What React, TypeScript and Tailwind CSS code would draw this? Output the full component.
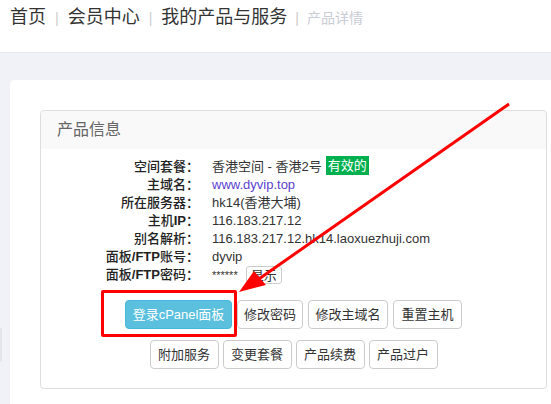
import React from 'react';

const B: React.FC<{ children: React.ReactNode }> = ({ children }) => <span className="font-bold">{children}</span>;

const rows: { label: React.ReactNode; key: string; value: React.ReactNode }[] = [
  {
    key: 'plan',
    label: '空间套餐：',
    value: (
      <>
        <span>香港空间 - 香港2号</span>
        <span className="-mt-[3px] ml-[4px] inline-block w-[43px] bg-[#00b04f] text-center text-[13px] leading-[19px] text-white">有效的</span>
      </>
    ),
  },
  { key: 'domain', label: '主域名：', value: <span className="text-[#5b3fd0]">www.dyvip.top</span> },
  { key: 'server', label: '所在服务器：', value: <span>hk14(香港大埔)</span> },
  {
    key: 'ip',
    label: (
      <>
        主机<B>IP</B>：
      </>
    ),
    value: <span>116.183.217.12</span>,
  },
  { key: 'alias', label: '别名解析：', value: <span>116.183.217.12.hk14.laoxuezhuji.com</span> },
  {
    key: 'ftp',
    label: (
      <>
        面板<B>/FTP</B>账号：
      </>
    ),
    value: <span>dyvip</span>,
  },
  {
    key: 'pwd',
    label: (
      <>
        面板<B>/FTP</B>密码：
      </>
    ),
    value: (
      <>
        <span className="text-[11px]">******</span>
        <span className="ml-[8px] inline-flex h-[18px] items-center rounded-[3px] border border-[#ccc] px-[4px] text-[13px] leading-[15px]">显示</span>
      </>
    ),
  },
];

const row1: [string, string][] = [
  ['修改密码', 'w-[66px]'],
  ['修改主域名', 'w-[80px]'],
  ['重置主机', 'w-[69px]'],
];
const row2 = ['附加服务', '变更套餐', '产品续费', '产品过户'];

const Btn: React.FC<{ children: React.ReactNode; primary?: boolean; className?: string }> = ({
  children,
  primary,
  className = '',
}) => (
  <div
    className={`h-[29px] rounded-[4px] border text-center text-[13px] leading-[27px] ${
      primary ? 'border-[#46b8da] bg-[#5bc0de] text-white' : 'border-[#ccc] bg-white text-[#333]'
    } ${className}`}
  >
    {children}
  </div>
);

export default function App() {
  return (
    <div
      className="relative h-[404px] w-[551px] overflow-hidden bg-[#f1f2f7] text-[#333]"
      style={{ fontFamily: '"Liberation Sans", "Noto Sans CJK SC", sans-serif' }}
    >
      {/* breadcrumb */}
      <div className="flex h-[53px] items-start border-b border-[#e6e8ee] bg-white pl-[10px] pt-[5px]">
        <div className="flex items-baseline text-[18px] leading-[24px] text-[#333]">
          <span>首页</span>
          <span className="mx-[9px] text-[14px] text-[#ccc]">|</span>
          <span>会员中心</span>
          <span className="mx-[9px] text-[14px] text-[#ccc]">|</span>
          <span>我的产品与服务</span>
          <span className="mx-[8px] text-[14px] text-[#ccc]">|</span>
          <span className="text-[14px] text-[#c8ccd4]">产品详情</span>
        </div>
      </div>

      <div className="pl-[10px] pt-[27px]">
        <div className="h-[400px] w-[580px] rounded-tl-[4px] bg-white pl-[30px] pt-[30px]">
          <div className="w-[507px] rounded-[4px] border border-[#ddd]">
            <div className="flex h-[38px] items-center rounded-t-[4px] bg-[#f9f9f9] pl-[16px] text-[16px] text-[#666]">
              产品信息
            </div>
            <div className="pb-[19px] pt-[9px]">
              {rows.map((r) => (
                <div key={r.key} className="flex h-[18px] items-center text-[13px] leading-[18px]">
                  <div className="w-[158px] text-right font-medium text-[#222]">{r.label}</div>
                  <div className="ml-[13px] flex items-center">{r.value}</div>
                </div>
              ))}
              <div className="mt-[16px] flex justify-center gap-[5px]">
                <Btn primary className="w-[107px]">登录cPanel面板</Btn>
                {row1.map(([b, w]) => (
                  <Btn key={b} className={w}>
                    {b}
                  </Btn>
                ))}
              </div>
              <div className="mt-[11px] flex justify-center gap-[4px]">
                {row2.map((b) => (
                  <Btn key={b} className="w-[69px]">
                    {b}
                  </Btn>
                ))}
              </div>
            </div>
          </div>
        </div>
      </div>

      {/* side sliver */}
      <div className="absolute left-0 top-[328px] h-[34px] w-[2px] bg-[#e4e6ec]" />

      {/* annotation overlay */}
      <div className="absolute left-[101px] top-[290px] h-[47px] w-[136px] rounded-[2px] border-[3px] border-[#ff0000]" />
      <svg className="absolute left-0 top-0" width="551" height="404" viewBox="0 0 551 404">
        <line x1="509" y1="104" x2="256" y2="281" stroke="#ff0000" strokeWidth="3" />
        <polygon points="239,292 254,271 266,285" fill="#ff0000" />
      </svg>
    </div>
  );
}
